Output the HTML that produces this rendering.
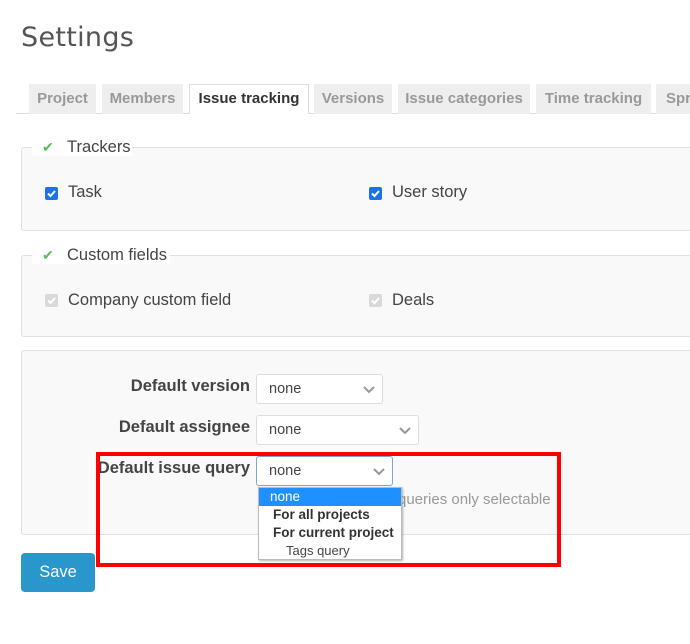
<!DOCTYPE html>
<html><head><meta charset="utf-8"><style>
*{box-sizing:border-box;margin:0;padding:0}
body{width:690px;height:644px;overflow:hidden;background:#fff;font-family:"Liberation Sans",Arial,sans-serif;color:#333;position:relative}
.a{position:absolute;white-space:nowrap}
h1{position:absolute;left:21px;top:22px;font-size:27px;font-weight:normal;color:#555;font-family:"DejaVu Sans","Liberation Sans",sans-serif;letter-spacing:0.3px}
.tab{position:absolute;top:84px;height:30px;background:#eee;color:#999;font-weight:bold;font-size:15px;line-height:30px;text-align:center}
.tab.on{background:#fff;color:#333;border:1px solid #ddd;border-bottom:none;line-height:28px;height:30px}
.fs{position:absolute;left:21px;width:700px;background:#f9f9f9;border:1px solid #e0e0e0;border-radius:3px}
.lg{position:absolute;background:#fff;font-size:16.5px;color:#444;line-height:18px}
.ck{position:absolute;width:13px;height:13px;border-radius:2px;background:#1a73e8}
.ck svg{position:absolute;left:1px;top:1px}
.ck.dis{background:#d9d9d9}
.t16{font-size:16.5px;color:#444}
.lbl{position:absolute;font-weight:bold;font-size:16.5px;color:#444;text-align:right;white-space:nowrap}
.sel{position:absolute;height:30px;background:#fff;border:1px solid #ddd;border-radius:3px;font-size:14.5px;color:#444;line-height:28px;padding-left:12px}
.sel svg{position:absolute;right:7px;top:11px}
</style></head><body>
<h1>Settings</h1>
<div class="a" style="left:16px;top:113px;width:700px;height:1px;background:#ddd"></div>
<div class="tab" style="left:29px;width:67px">Project</div>
<div class="tab" style="left:102px;width:81px">Members</div>
<div class="tab on" style="left:189px;width:120px">Issue tracking</div>
<div class="tab" style="left:314px;width:78px">Versions</div>
<div class="tab" style="left:398px;width:132px">Issue categories</div>
<div class="tab" style="left:536px;width:115px">Time tracking</div>
<div class="tab" style="left:656px;width:60px;text-align:left;padding-left:10px">Spr</div>

<div class="fs" style="top:147px;height:84px"></div>
<div class="lg" style="left:32px;top:138px;width:100px;padding-left:10px"><span style="color:#5cb85c;font-size:14px;position:absolute;left:10px">&#10004;</span><span style="position:absolute;left:35px">Trackers</span>&nbsp;</div>
<div class="ck" style="left:45px;top:187px"><svg width="11" height="11"><path d="M2 5.5l2.5 2.5 4.5-5" stroke="#fff" stroke-width="2" fill="none"/></svg></div>
<div class="a t16" style="left:68px;top:183px">Task</div>
<div class="ck" style="left:369px;top:187px"><svg width="11" height="11"><path d="M2 5.5l2.5 2.5 4.5-5" stroke="#fff" stroke-width="2" fill="none"/></svg></div>
<div class="a t16" style="left:392px;top:183px">User story</div>

<div class="fs" style="top:255px;height:82px"></div>
<div class="lg" style="left:32px;top:246px;width:138px"><span style="color:#5cb85c;font-size:14px;position:absolute;left:10px">&#10004;</span><span style="position:absolute;left:35px">Custom fields</span>&nbsp;</div>
<div class="ck dis" style="left:45px;top:294px"><svg width="11" height="11"><path d="M2 5.5l2.5 2.5 4.5-5" stroke="#fff" stroke-width="2" fill="none"/></svg></div>
<div class="a t16" style="left:68px;top:291px">Company custom field</div>
<div class="ck dis" style="left:369px;top:294px"><svg width="11" height="11"><path d="M2 5.5l2.5 2.5 4.5-5" stroke="#fff" stroke-width="2" fill="none"/></svg></div>
<div class="a t16" style="left:392px;top:291px">Deals</div>

<div class="fs" style="top:350px;height:185px"></div>
<div class="lbl" style="right:440px;top:377px">Default version</div>
<div class="sel" style="left:256px;top:374px;width:127px">none<svg width="12" height="8"><path d="M1 1l5 5 5-5" stroke="#999" stroke-width="2" fill="none"/></svg></div>
<div class="lbl" style="right:440px;top:418px">Default assignee</div>
<div class="sel" style="left:256px;top:415px;width:163px">none<svg width="12" height="8"><path d="M1 1l5 5 5-5" stroke="#999" stroke-width="2" fill="none"/></svg></div>
<div class="lbl" style="right:440px;top:459px">Default issue query</div>
<div class="sel" style="left:256px;top:456px;width:137px;border-color:#7aa7d6">none<svg width="12" height="8"><path d="M1 1l5 5 5-5" stroke="#999" stroke-width="2" fill="none"/></svg></div>
<div class="a" style="left:398px;top:491px;font-size:15px;color:#999">queries only selectable</div>

<div class="a" style="left:258px;top:487px;width:144px;height:73px;background:#fff;border:1px solid #bbb;box-shadow:1px 1px 2px rgba(0,0,0,.3);font-size:13.5px;line-height:18px;color:#333">
<div style="background:#1e90ff;color:#fff;padding-left:11px;height:18px">none</div>
<div style="font-weight:bold;padding-left:14px">For all projects</div>
<div style="font-weight:bold;padding-left:14px">For current project</div>
<div style="padding-left:27px;font-size:13px;color:#444">Tags query</div>
</div>

<div class="a" style="left:96px;top:452px;width:465px;height:115px;border:4px solid #f00"></div>

<div class="a" style="left:21px;top:553px;width:74px;height:39px;background:#2996cc;border-radius:4px;color:#fff;font-size:16.5px;text-align:center;line-height:38px">Save</div>
</body></html>
